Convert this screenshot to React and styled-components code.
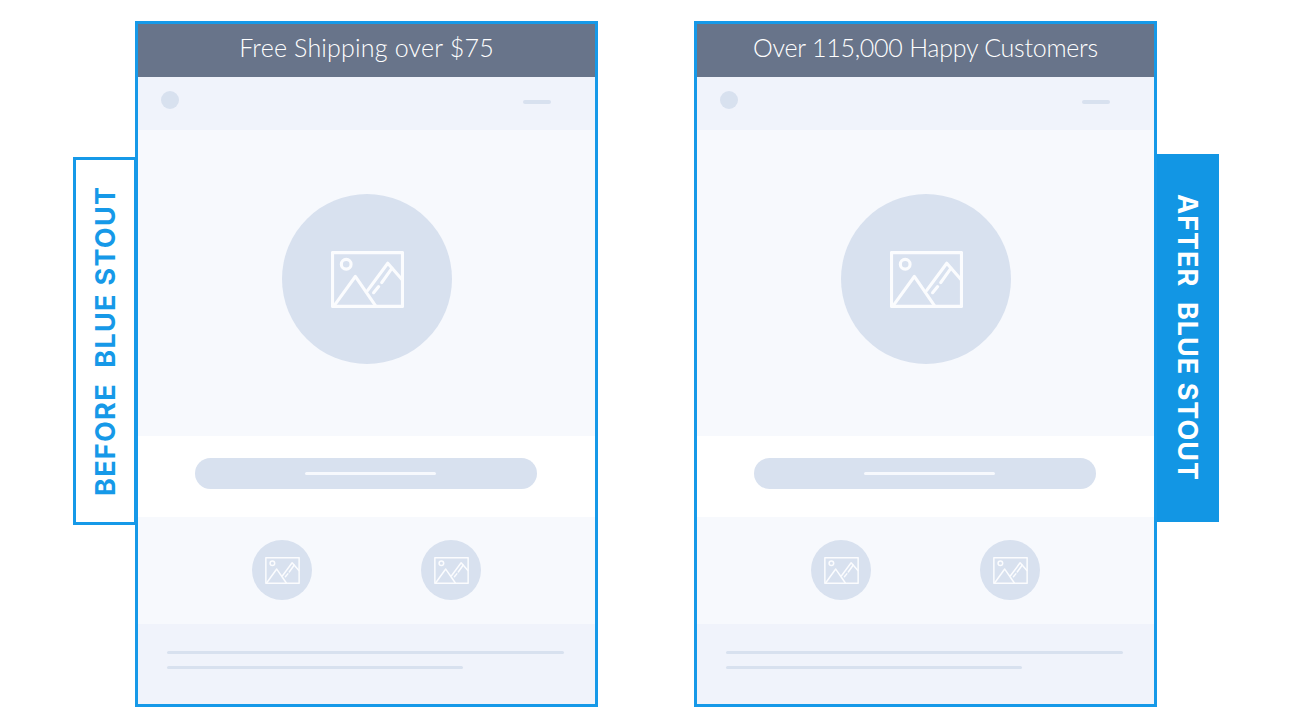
import React from "react";
import styled, { createGlobalStyle } from "styled-components";

const Global = createGlobalStyle`
  html, body { margin: 0; padding: 0; background: #fff; }
  body { height: 727px; overflow: hidden; font-family: "Lato", "Liberation Sans", sans-serif; }
`;

const Page = styled.div`
  display: flex;
  align-items: flex-start;
  gap: 96px;
  padding: 21px 0 0 73px;
`;

const Group = styled.div`
  display: flex;
  align-items: flex-start;
`;

const Tag = styled.div`
  box-sizing: border-box;
  width: 64px;
  height: 368px;
  display: flex;
  align-items: center;
  justify-content: center;
  writing-mode: vertical-rl;
  font-family: "Inter", "Liberation Sans", sans-serif;
  font-weight: 700;
  font-size: 27px;
  white-space: pre;
  ${(p) =>
    p.$filled
      ? `
    margin: 133px 0 0 -2px;
    background: #1296e4;
    color: #fff;
    letter-spacing: 1px;
  `
      : `
    margin: 136px -2px 0 0;
    border: 3px solid #1699e8;
    background: #fff;
    color: #1699e8;
    letter-spacing: 1.3px;
    transform: rotate(180deg);
  `}
`;

const Phone = styled.div`
  box-sizing: border-box;
  position: relative;
  z-index: 1;
  width: 463px;
  height: 686px;
  border: 3px solid #1699e8;
  display: flex;
  flex-direction: column;
  background: #fff;
`;

const Header = styled.div`
  height: 53px;
  flex: none;
  background: #68748a;
  color: #fff;
  display: flex;
  align-items: center;
  justify-content: center;
  font-size: 25px;
  font-weight: 300;
  letter-spacing: ${(p) => p.$tracking}px;
  padding-bottom: 8px;
  box-sizing: border-box;
`;

const Nav = styled.div`
  height: 53px;
  flex: none;
  background: #f0f3fb;
  display: flex;
  align-items: center;
  justify-content: space-between;
  padding: 0 44px 8px 23px;
  box-sizing: border-box;
`;

const Dot = styled.div`
  width: 18px;
  height: 18px;
  border-radius: 50%;
  background: #d8e1ef;
`;

const Dash = styled.div`
  width: 28px;
  height: 4px;
  border-radius: 2px;
  background: #d8e1ef;
  margin-top: 4px;
`;

const Hero = styled.div`
  height: 306px;
  flex: none;
  background: #f7f9fd;
  display: flex;
  justify-content: center;
  padding-top: 64px;
  box-sizing: border-box;
`;

const Disc = styled.div`
  width: ${(p) => p.$size}px;
  height: ${(p) => p.$size}px;
  border-radius: 50%;
  background: #d8e1ef;
  display: flex;
  align-items: center;
  justify-content: center;
`;

const CtaBand = styled.div`
  height: 81px;
  flex: none;
  background: #fff;
  display: flex;
  justify-content: center;
  padding: 22px 1px 0 0;
  box-sizing: border-box;
`;

const Pill = styled.div`
  width: 342px;
  height: 31px;
  border-radius: 16px;
  background: #d8e1ef;
  display: flex;
  align-items: center;
  justify-content: center;
  padding-left: 8px;
  box-sizing: border-box;
`;

const PillLine = styled.div`
  width: 131px;
  height: 3px;
  border-radius: 2px;
  background: #f7f9fd;
`;

const Thumbs = styled.div`
  height: 107px;
  flex: none;
  background: #f7f9fd;
  display: flex;
  justify-content: center;
  gap: 109px;
  padding-top: 23px;
  box-sizing: border-box;
`;

const Footer = styled.div`
  flex: 1;
  background: #f0f3fb;
  display: flex;
  flex-direction: column;
  gap: 12px;
  padding: 27px 0 0 29px;
  box-sizing: border-box;
`;

const FootLine = styled.div`
  width: ${(p) => p.$w}px;
  height: 3px;
  border-radius: 2px;
  background: #d8e1ef;
`;

const PictureSvg = styled.svg`
  margin-left: 1px;
  fill: none;
  stroke: #fbfcfe;
  stroke-width: 3.1;
  stroke-linecap: round;
  stroke-linejoin: round;
`;

const PictureIcon = ({ width, height }) => (
  <PictureSvg width={width} height={height} viewBox="0 0 72 56">
    <rect x="1.5" y="1.5" width="69" height="53" />
    <circle cx="15" cy="13" r="4.8" />
    <path d="M3 54 L24 25 L44 54" />
    <path d="M36 39 L56 12 L70 28" />
    <path d="M42 41 L47 35" />
    <path d="M50 31 L60 17" />
  </PictureSvg>
);

const Mock = ({ title, tracking }) => (
  <Phone>
    <Header $tracking={tracking}>{title}</Header>
    <Nav>
      <Dot />
      <Dash />
    </Nav>
    <Hero>
      <Disc $size={170}>
        <PictureIcon width={73} height={57} />
      </Disc>
    </Hero>
    <CtaBand>
      <Pill>
        <PillLine />
      </Pill>
    </CtaBand>
    <Thumbs>
      <Disc $size={60}>
        <PictureIcon width={35} height={27} />
      </Disc>
      <Disc $size={60}>
        <PictureIcon width={35} height={27} />
      </Disc>
    </Thumbs>
    <Footer>
      <FootLine $w={397} />
      <FootLine $w={296} />
    </Footer>
  </Phone>
);

export default function App() {
  return (
    <>
      <Global />
      <Page>
        <Group>
          <Tag>BEFORE  BLUE STOUT</Tag>
          <Mock title="Free Shipping over $75" tracking={0.2} />
        </Group>
        <Group>
          <Mock title="Over 115,000 Happy Customers" tracking={-0.25} />
          <Tag $filled>AFTER  BLUE STOUT</Tag>
        </Group>
      </Page>
    </>
  );
}
